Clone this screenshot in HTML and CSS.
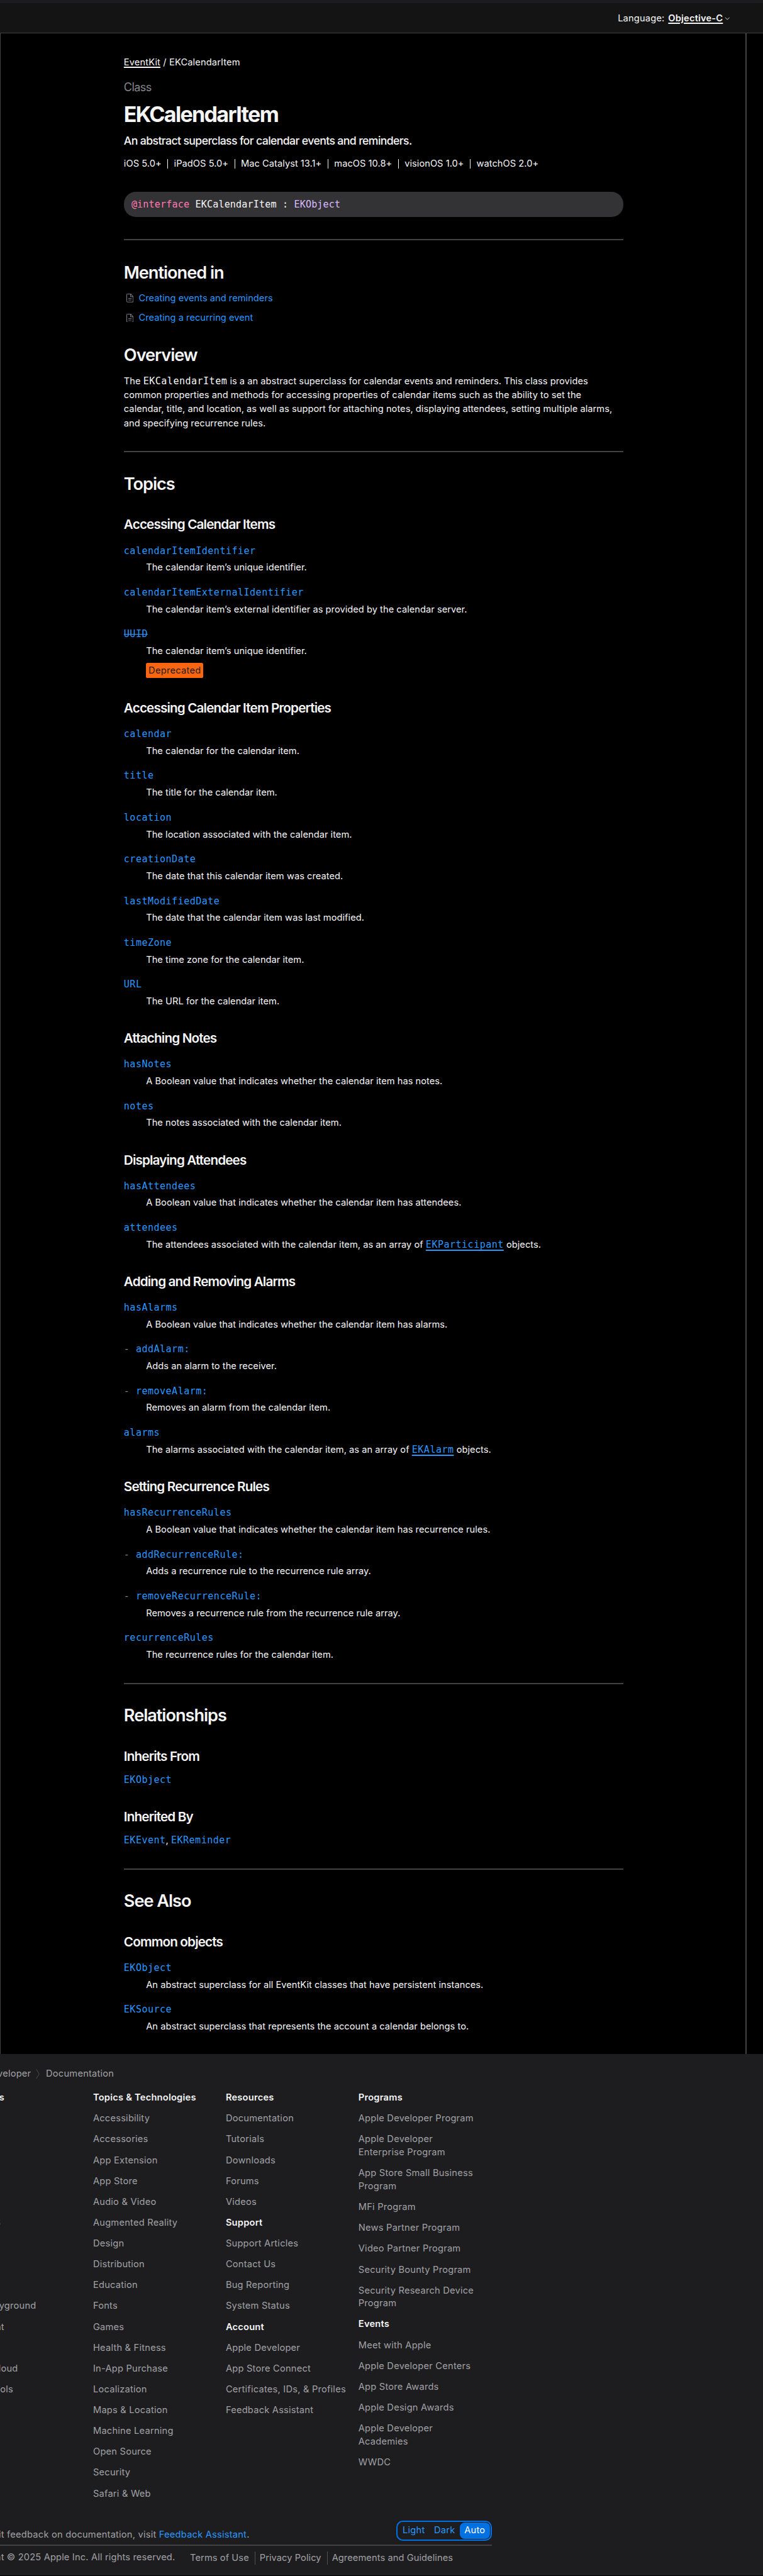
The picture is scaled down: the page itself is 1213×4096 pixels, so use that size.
FILE: index.html
```html
<!DOCTYPE html>
<html lang="en">
<head>
<meta charset="utf-8">
<title>EKCalendarItem | Developer Documentation</title>
<link rel="stylesheet" href="styles.css">
</head>
<body>
<header class="nav">
  <div class="language">Language: <a class="language-current">Objective-C</a><svg class="chevron" viewBox="0 0 10 6"><path d="M1 .8l4 4 4-4"/></svg></div>
</header>
<main class="doc">
  <div class="content">
    <nav class="crumbs"><a>EventKit</a> / EKCalendarItem</nav>
    <p class="eyebrow">Class</p>
    <h1>EKCalendarItem</h1>
    <p class="abstract">An abstract superclass for calendar events and reminders.</p>
    <ul class="platforms"><li>iOS 5.0+</li><li>iPadOS 5.0+</li><li>Mac Catalyst 13.1+</li><li>macOS 10.8+</li><li>visionOS 1.0+</li><li>watchOS 2.0+</li></ul>
    <pre class="declaration"><span class="keyword">@interface</span> EKCalendarItem : <span class="type">EKObject</span></pre>

    <section class="section intro">
      <h2>Mentioned in</h2>
      <ul class="mentions">
        <li><svg class="article" viewBox="0 0 13 16"><path d="M2.300.6h5.500l4.600 4.600v8.500a1.700 1.700 0 0 1-1.700 1.700H2.300A1.700 1.700 0 0 1 .6 13.700V2.300A1.700 1.700 0 0 1 2.300.6zM7.600.6v4.800h4.800M3.500 8.800h6M3.500 11.600h6"/></svg><a>Creating events and reminders</a></li>
        <li><svg class="article" viewBox="0 0 13 16"><path d="M2.300.6h5.500l4.600 4.600v8.500a1.700 1.700 0 0 1-1.700 1.700H2.300A1.700 1.700 0 0 1 .6 13.700V2.300A1.700 1.700 0 0 1 2.300.6zM7.600.6v4.800h4.800M3.500 8.800h6M3.500 11.600h6"/></svg><a>Creating a recurring event</a></li>
      </ul>
      <h2 class="overview">Overview</h2>
      <p class="prose">The <code>EKCalendarItem</code> is a an abstract superclass for calendar events and reminders. This class provides<br>common properties and methods for accessing properties of calendar items such as the ability to set the<br>calendar, title, and location, as well as support for attaching notes, displaying attendees, setting multiple alarms,<br>and specifying recurrence rules.</p>
    </section>

    <section class="section">
      <h2>Topics</h2>
      <h3>Accessing Calendar Items</h3>
      <dl>
        <dt>calendarItemIdentifier</dt><dd>The calendar item’s unique identifier.</dd>
        <dt>calendarItemExternalIdentifier</dt><dd>The calendar item’s external identifier as provided by the calendar server.</dd>
        <dt><s>UUID</s></dt><dd>The calendar item’s unique identifier.<div class="badges"><span class="badge">Deprecated</span></div></dd>
      </dl>
      <h3>Accessing Calendar Item Properties</h3>
      <dl>
        <dt>calendar</dt><dd>The calendar for the calendar item.</dd>
        <dt>title</dt><dd>The title for the calendar item.</dd>
        <dt>location</dt><dd>The location associated with the calendar item.</dd>
        <dt>creationDate</dt><dd>The date that this calendar item was created.</dd>
        <dt>lastModifiedDate</dt><dd>The date that the calendar item was last modified.</dd>
        <dt>timeZone</dt><dd>The time zone for the calendar item.</dd>
        <dt>URL</dt><dd>The URL for the calendar item.</dd>
      </dl>
      <h3>Attaching Notes</h3>
      <dl>
        <dt>hasNotes</dt><dd>A Boolean value that indicates whether the calendar item has notes.</dd>
        <dt>notes</dt><dd>The notes associated with the calendar item.</dd>
      </dl>
      <h3>Displaying Attendees</h3>
      <dl>
        <dt>hasAttendees</dt><dd>A Boolean value that indicates whether the calendar item has attendees.</dd>
        <dt>attendees</dt><dd>The attendees associated with the calendar item, as an array of <code><a>EKParticipant</a></code> objects.</dd>
      </dl>
      <h3>Adding and Removing Alarms</h3>
      <dl>
        <dt>hasAlarms</dt><dd>A Boolean value that indicates whether the calendar item has alarms.</dd>
        <dt><i>-</i> addAlarm:</dt><dd>Adds an alarm to the receiver.</dd>
        <dt><i>-</i> removeAlarm:</dt><dd>Removes an alarm from the calendar item.</dd>
        <dt>alarms</dt><dd>The alarms associated with the calendar item, as an array of <code><a>EKAlarm</a></code> objects.</dd>
      </dl>
      <h3>Setting Recurrence Rules</h3>
      <dl>
        <dt>hasRecurrenceRules</dt><dd>A Boolean value that indicates whether the calendar item has recurrence rules.</dd>
        <dt><i>-</i> addRecurrenceRule:</dt><dd>Adds a recurrence rule to the recurrence rule array.</dd>
        <dt><i>-</i> removeRecurrenceRule:</dt><dd>Removes a recurrence rule from the recurrence rule array.</dd>
        <dt>recurrenceRules</dt><dd>The recurrence rules for the calendar item.</dd>
      </dl>
    </section>

    <section class="section">
      <h2>Relationships</h2>
      <h3>Inherits From</h3>
      <p class="related"><code>EKObject</code></p>
      <h3>Inherited By</h3>
      <p class="related"><code>EKEvent</code>, <code>EKReminder</code></p>
    </section>

    <section class="section">
      <h2>See Also</h2>
      <h3>Common objects</h3>
      <dl>
        <dt>EKObject</dt><dd>An abstract superclass for all EventKit classes that have persistent instances.</dd>
        <dt>EKSource</dt><dd>An abstract superclass that represents the account a calendar belongs to.</dd>
      </dl>
    </section>
  </div>
</main>
<footer class="footer">
  <div class="footer-inner">
    <nav class="trail"><span>Developer</span><svg class="trail-sep" viewBox="0 0 8 18"><path d="M1 .5l5 8.500-5 8.500"/></svg><span>Documentation</span></nav>
    <div class="directory">
      <ul>
        <li class="head">Platforms</li><li>iOS</li><li>iPadOS</li><li>macOS</li><li>tvOS</li><li>visionOS</li><li>watchOS</li>
        <li class="head">Tools</li><li>Swift</li><li>SwiftUI</li><li>Swift Playground</li><li>TestFlight</li><li>Xcode</li><li>Xcode Cloud</li><li>SF Symbols</li>
      </ul>
      <ul>
        <li class="head">Topics &amp; Technologies</li><li>Accessibility</li><li>Accessories</li><li>App Extension</li><li>App Store</li><li>Audio &amp; Video</li><li>Augmented Reality</li><li>Design</li><li>Distribution</li><li>Education</li><li>Fonts</li><li>Games</li><li>Health &amp; Fitness</li><li>In-App Purchase</li><li>Localization</li><li>Maps &amp; Location</li><li>Machine Learning</li><li>Open Source</li><li>Security</li><li>Safari &amp; Web</li>
      </ul>
      <ul>
        <li class="head">Resources</li><li>Documentation</li><li>Tutorials</li><li>Downloads</li><li>Forums</li><li>Videos</li>
        <li class="head">Support</li><li>Support Articles</li><li>Contact Us</li><li>Bug Reporting</li><li>System Status</li>
        <li class="head">Account</li><li>Apple Developer</li><li>App Store Connect</li><li>Certificates, IDs, &amp; Profiles</li><li>Feedback Assistant</li>
      </ul>
      <ul>
        <li class="head">Programs</li><li>Apple Developer Program</li><li>Apple Developer<br>Enterprise Program</li><li>App Store Small Business<br>Program</li><li>MFi Program</li><li>News Partner Program</li><li>Video Partner Program</li><li>Security Bounty Program</li><li>Security Research Device<br>Program</li>
        <li class="head">Events</li><li>Meet with Apple</li><li>Apple Developer Centers</li><li>App Store Awards</li><li>Apple Design Awards</li><li>Apple Developer<br>Academies</li><li>WWDC</li>
      </ul>
    </div>
    <div class="feedback">
      <p>To submit feedback on documentation, visit <a>Feedback Assistant</a>.</p>
      <div class="scheme"><span>Light</span><span>Dark</span><span class="on">Auto</span></div>
    </div>
    <div class="legal">
      <p>Copyright © 2025 Apple Inc. All rights reserved.</p>
      <ul><li>Terms of Use</li><li>Privacy Policy</li><li>Agreements and Guidelines</li></ul>
    </div>
  </div>
</footer>
</body>
</html>
```
FILE: styles.css
```css
/* 1rem = 10 design units */
html { font-size: 8.627px; }
* { box-sizing: border-box; margin: 0; padding: 0; }
ul { list-style: none; }
body {
  background: #000;
  color: #f5f5f7;
  font: 1.7rem/2.5rem Inter, sans-serif;
  letter-spacing: 0.003rem;
  overflow-x: hidden;
}
a { color: #2997ff; }
code, dt, .declaration {
  font-family: "DejaVu Sans Mono", monospace;
  font-size: 1.75rem;
  letter-spacing: 0.053rem;
}
code { line-height: 0; }
code a { text-decoration: underline; text-decoration-thickness: 0.2rem; text-underline-offset: 0.3rem; }

.nav {
  height: 6.1rem;
  border-top: 5px solid #1d1d1f;
  border-bottom: 1px solid #424245;
  background: #141414;
  display: flex;
  justify-content: flex-end;
  padding: 1.6rem 6.1rem 0 0;
}
.language { display: flex; gap: 0.68rem; white-space: nowrap; letter-spacing: 0.02rem; }
.language-current { color: #f5f5f7; font-weight: 600; text-decoration: underline; text-decoration-thickness: 0.2rem; text-underline-offset: 0.25rem; }
.chevron { width: 1rem; height: 0.6rem; margin: 0.95rem 0 0 -0.4rem; fill: none; stroke: #f5f5f7; }

.doc {
  width: 137.6rem;
  height: 372.5rem;
  border-left: 1px solid #424245;
  border-right: 2px solid #424245;
  padding: 4.27rem 0 0 22.7rem;
}
.content { width: 92rem; white-space: nowrap; }
.crumbs { letter-spacing: 0.015rem; }
.crumbs a { color: inherit; text-decoration: underline; text-decoration-thickness: 0.2rem; text-underline-offset: 0.25rem; }
.eyebrow { color: #86868b; font-size: 2.1rem; letter-spacing: -0.068rem; margin-top: 1.93rem; }
h1 { font-size: 3.95rem; line-height: 4.4rem; font-weight: 700; letter-spacing: -0.195rem; margin-top: 1.57rem; }
.abstract { font-size: 2.05rem; font-weight: 500; line-height: 2.9rem; letter-spacing: -0.072rem; margin-top: 1.17rem; }
.platforms { display: flex; margin-top: 1.95rem; line-height: 1.8rem; }
.platforms li + li { border-left: 1px solid #f5f5f7; margin-left: 1.1rem; padding-left: 1.1rem; }
.declaration {
  background: #333336;
  height: 4.6rem;
  line-height: 4.8rem;
  border-radius: 2.2rem;
  padding-left: 1.4rem;
  margin: 4.3rem 0 4.1rem;
  letter-spacing: 0.018rem;
}
.keyword { color: #ff7ab2; }
.type { color: #dabaff; }

.section { border-top: 2px solid #424245; padding: 3.97rem 0 3.82rem; }
.intro { padding-top: 4.15rem; padding-bottom: 3.84rem; }
h2 { font-size: 3.15rem; line-height: 3.6rem; font-weight: 600; letter-spacing: -0.12rem; }
h3 { font-size: 2.4rem; line-height: 2.8rem; font-weight: 600; letter-spacing: -0.1rem; margin-top: 4.38rem; }
dl + h3, .related + h3 { margin-top: 4.12rem; }
.mentions { margin-top: 1.13rem; }
.mentions li { height: 3.6rem; line-height: 3.6rem; display: flex; align-items: center; }
.article { width: 1.3rem; height: 1.6rem; margin: 0 0.97rem 0 0.47rem; fill: none; stroke: #76767b; stroke-width: 1.2; }
.overview { margin-top: 3.27rem; }
.prose { line-height: 2.6rem; margin-top: 1.66rem; }
dt { color: #2997ff; line-height: 2.5rem; margin-top: 2.11rem; }
dt:first-child { margin-top: 2.21rem; }
dt i { color: #86868b; font-style: normal; }
dd { margin: 0.59rem 0 0 4.1rem; line-height: 2.5rem; }
.badges { display: flex; margin-top: 0.8rem; }
.badge { background: #f9660f; color: #1d1d1f; border-radius: 0.3rem; padding: 0 0.45rem; line-height: 2.87rem; letter-spacing: 0.03rem; }
.related { line-height: 2.5rem; margin-top: 1.75rem; }
.related code { color: #2997ff; }

.footer { background: #1d1d1f; color: #a1a1a6; height: 96.1rem; overflow: hidden; white-space: nowrap; letter-spacing: 0.025rem; }
.footer-inner { width: 97.9rem; margin-left: -7.3rem; padding-top: 2.45rem; }
.trail { display: flex; padding-left: 4.6rem; line-height: 2.4rem; }
.trail-sep { width: 0.8rem; height: 1.8rem; margin: 0.35rem 1.1rem 0 0.85rem; fill: none; stroke: #515154; }
.directory { display: grid; grid-template-columns: repeat(4, 24.45rem); margin-top: 2rem; height: 78.83rem; align-content: start; }
.directory li { line-height: 2.4rem; margin-bottom: 1.44rem; }
.head { color: #f5f5f7; font-weight: 600; }
.feedback { display: flex; justify-content: space-between; align-items: flex-end; border-bottom: 2px solid #424245; height: 5rem; padding-bottom: 0.8rem; }
.feedback p { line-height: 2.04rem; }
.scheme { display: flex; border: 2px solid #0071e3; border-radius: 1.2rem; padding: 1px; height: 3.6rem; line-height: 2.9rem; color: #2997ff; }
.scheme span { padding: 0 0.85rem; }
.scheme .on { background: #0071e3; color: #fff; border-radius: 0.9rem; }
.legal { display: flex; padding-top: 0.9rem; gap: 2.75rem; letter-spacing: 0.018rem; }
.legal ul { display: flex; line-height: 2.4rem; margin-top: 0.15rem; height: 2.4rem; letter-spacing: 0.008rem; }
.legal li + li { border-left: 1px solid #515154; margin-left: 1.1rem; padding-left: 0.75rem; }
```
